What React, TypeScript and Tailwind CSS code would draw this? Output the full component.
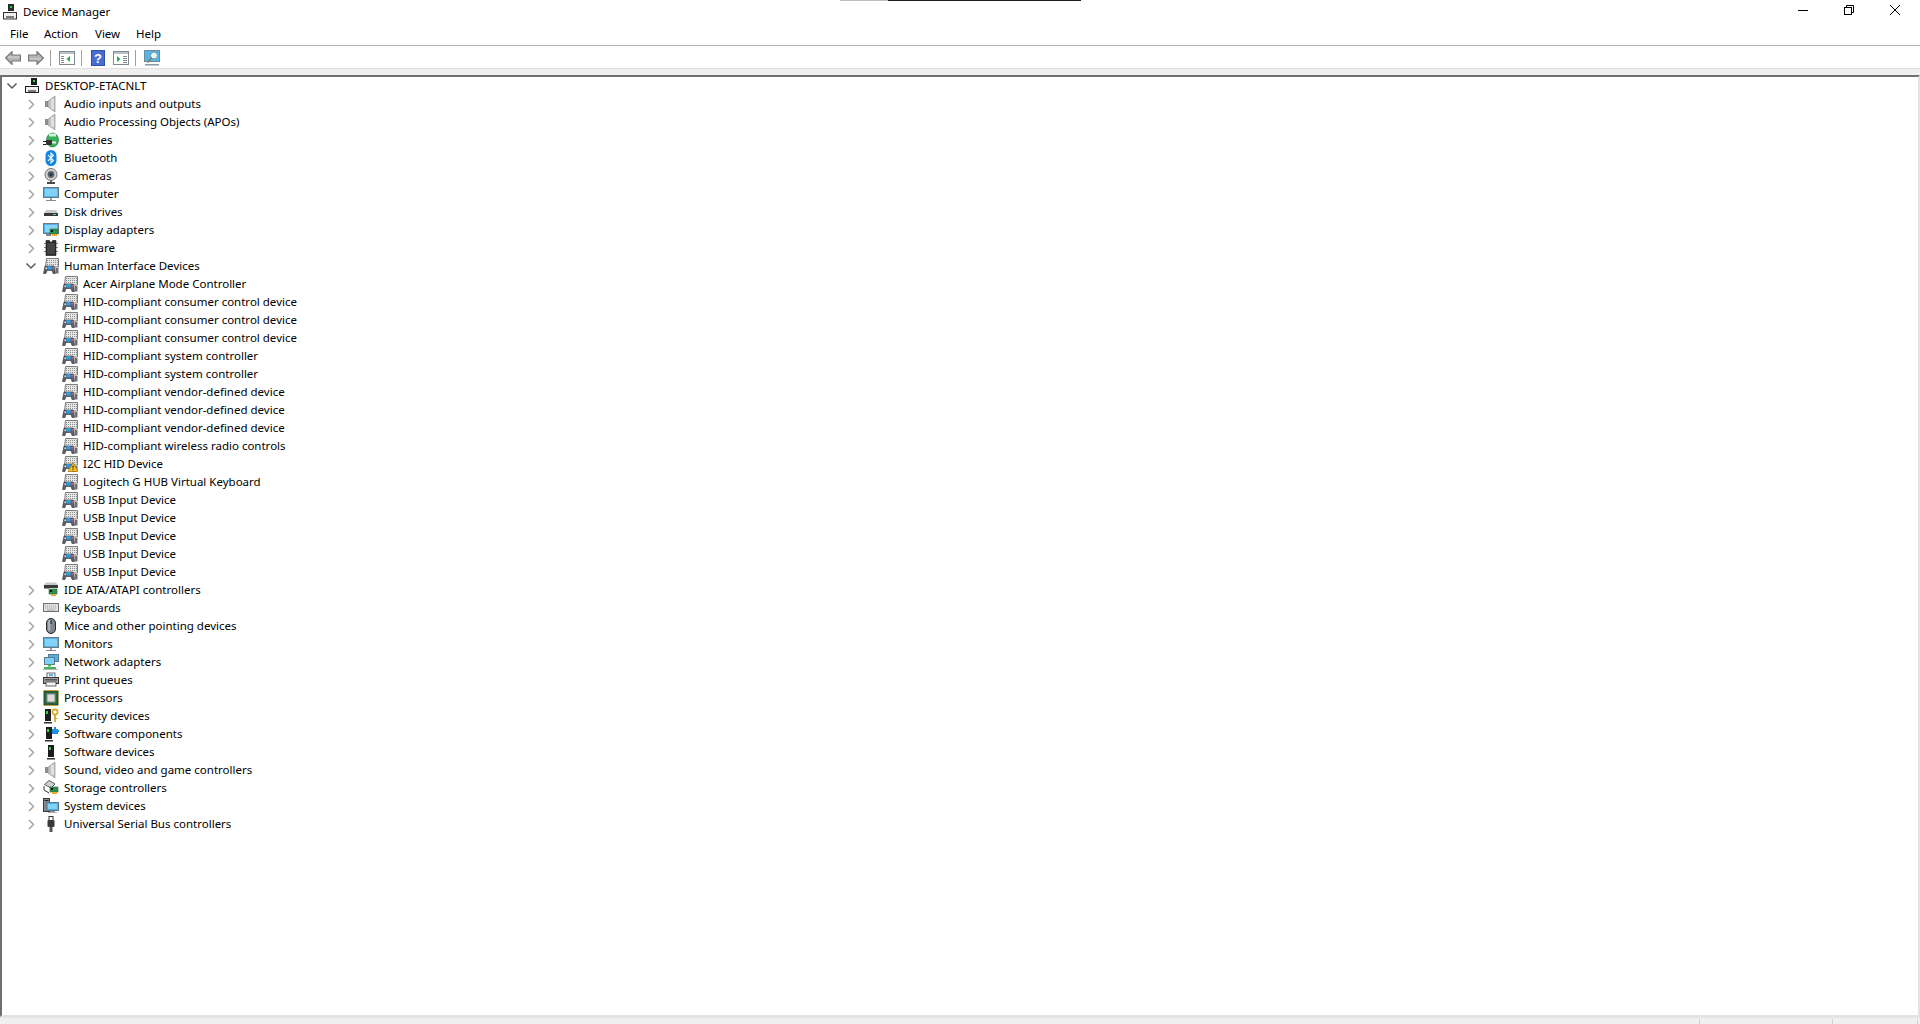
import type { ReactNode } from 'react'

type IconProps = { warn?: boolean }

const Svg = ({ children }: { children: ReactNode }) => (
  <svg width="16" height="16" viewBox="0 0 16 16" className="shrink-0">
    {children}
  </svg>
)

const Tower = ({ x = 4 }: { x?: number }) => (
  <g>
    <rect x={x} y="1" width="6" height="12" fill="#1c1c1c" />
    <rect x={x + 1} y="3" width="2" height="3" fill="#35d04a" />
    <rect x={x - 1} y="14" width="8" height="1.5" fill="#333" />
  </g>
)

const Speaker = () => (
  <Svg>
    <rect x="2" y="5" width="3" height="6" fill="#8f8f8f" />
    <path d="M5 5 L12 0 V16 L5 11 Z" fill="#c2c2c2" stroke="#8a8a8a" strokeWidth="0.6" />
    <rect x="8" y="3" width="3" height="10" fill="#e0e0e0" />
  </Svg>
)

const Screen = () => (
  <Svg>
    <rect x="0.5" y="1.5" width="15" height="10" fill="#4fb0ea" stroke="#6d7a84" />
    <rect x="2" y="3" width="12" height="7" fill="#83d2f8" />
    <rect x="7" y="12" width="2" height="2" fill="#9a9a9a" />
    <rect x="3" y="14" width="10" height="1" fill="#8a8a8a" />
  </Svg>
)

const Card = ({ x = 7, y = 8 }: { x?: number; y?: number }) => (
  <g>
    <rect x={x} y={y} width="8" height="5" fill="#2f8f4e" stroke="#1f6b3a" strokeWidth="0.6" />
    <rect x={x + 1} y={y + 1} width="2" height="2" fill="#111" />
    <rect x={x + 2} y={y + 5} width="5" height="2" fill="#f0a830" />
  </g>
)

const Drive = ({ y = 7 }: { y?: number }) => (
  <g>
    <path d={`M3 ${y} H13 L15 ${y + 3} H1 Z`} fill="#c9c9c9" />
    <rect x="1" y={y + 3} width="14" height="3" fill="#3a3a3a" />
    <rect x="10" y={y + 4} width="3" height="1" fill="#4fe060" />
  </g>
)

const RootIcon = () => (
  <Svg>
    <rect x="7" y="0" width="6" height="7" fill="#1c1c1c" />
    <rect x="9" y="2" width="2" height="2" fill="#35d04a" />
    <rect x="1.5" y="8.5" width="13" height="6" fill="#efefef" stroke="#222" />
    <rect x="4" y="12" width="8" height="2" fill="#7c7c7c" />
  </Svg>
)

const Batteries = () => (
  <Svg>
    <ellipse cx="9.5" cy="8" rx="6" ry="7" fill="#38b05a" stroke="#1e7a3a" strokeWidth="0.7" />
    <rect x="6" y="1.5" width="7" height="3" fill="#d8efd9" />
    <rect x="3" y="8" width="6" height="5" rx="1" fill="#333" />
    <rect x="0" y="9" width="3" height="1" fill="#222" />
    <rect x="0" y="12" width="3" height="1" fill="#222" />
    <rect x="9" y="9.5" width="4" height="2" fill="#eee" />
  </Svg>
)

const Bluetooth = () => (
  <Svg>
    <rect x="2.5" y="0" width="11" height="16" rx="5.5" fill="#0f86e8" />
    <path d="M5 5.2 L10.5 10.5 L8 13 V3 L10.5 5.5 L5 10.8" fill="none" stroke="#fff" strokeWidth="1.1" />
  </Svg>
)

const Camera = () => (
  <Svg>
    <circle cx="8" cy="6.5" r="6" fill="#d0d0d0" stroke="#777" />
    <circle cx="8" cy="6.5" r="3.4" fill="#5a6670" />
    <circle cx="8" cy="6.5" r="1.5" fill="#2a3036" />
    <rect x="7" y="12.5" width="2" height="1.5" fill="#666" />
    <rect x="4" y="14" width="8" height="2" fill="#4a4a4a" />
  </Svg>
)

const Disk = () => (
  <Svg>
    <Drive y={6} />
  </Svg>
)

const Display = () => (
  <Svg>
    <rect x="0.5" y="1.5" width="15" height="10" fill="#4fb0ea" stroke="#6d7a84" />
    <rect x="2" y="3" width="12" height="7" fill="#8ad4f7" />
    <rect x="3" y="12" width="5" height="2" fill="#8a8a8a" />
    <Card x={7} y={7} />
  </Svg>
)

const Firmware = () => (
  <Svg>
    <path d="M3 0.5 H6.5 V2 H9.5 V0.5 H13 V15.5 H3 Z" fill="#2b2b2b" stroke="#111" strokeWidth="0.6" />
    <rect x="4" y="3" width="8" height="11" fill="#444" />
    <rect x="1" y="3" width="2" height="1" fill="#777" />
    <rect x="1" y="7" width="2" height="1" fill="#777" />
    <rect x="1" y="11" width="2" height="1" fill="#777" />
    <rect x="13" y="3" width="2" height="1" fill="#777" />
    <rect x="13" y="7" width="2" height="1" fill="#777" />
    <rect x="13" y="11" width="2" height="1" fill="#777" />
  </Svg>
)

const Hid = ({ warn }: IconProps) => (
  <Svg>
    {/* keyboard */}
    <path d="M3.5 0.5 H15.5 V9 H2.5 Z" fill="#e6e6e6" stroke="#7d7d7d" />
    <path d="M4 2.5 H15 M4 4.5 H15 M4 6.5 H15" stroke="#8f8f8f" strokeWidth="1" strokeDasharray="1 1" />
    {/* gamepad */}
    <path d="M0.5 15.5 L2 8 H11 L12.5 15.5 H10 L9 12.5 H4 L3 15.5 Z" fill="#5d6269" stroke="#2f3338" strokeWidth="0.6" />
    <rect x="4.5" y="8" width="4" height="3.5" fill="#2a9ff0" />
    <rect x="9.5" y="9" width="1.5" height="1.5" fill="#d86a6a" />
    <rect x="2.5" y="9.5" width="1.5" height="1.5" fill="#e8e8e8" />
    <rect x="12.5" y="10" width="3" height="5.5" fill="#6c7076" />
    {warn && (
      <g>
        <path d="M11 6.5 L16 15.5 H6 Z" fill="#f6c02c" stroke="#a87000" strokeWidth="0.7" />
        <rect x="10.5" y="9.5" width="1" height="3" fill="#222" />
        <rect x="10.5" y="13.2" width="1" height="1" fill="#222" />
      </g>
    )}
  </Svg>
)

const Ide = () => (
  <Svg>
    <path d="M3 0.5 H13 L15 3 H1 Z" fill="#c9c9c9" />
    <rect x="1" y="3" width="14" height="3" fill="#3a3a3a" />
    <rect x="1" y="6" width="5" height="1" fill="#9a9a9a" />
    <Card x={6} y={7} />
  </Svg>
)

const Keyboards = () => (
  <Svg>
    <rect x="0.5" y="3.5" width="15" height="8" fill="#e2e2e2" stroke="#6f6f6f" />
    <path d="M2 6 H14 M2 8 H14" stroke="#9c9c9c" strokeWidth="1" strokeDasharray="1 1" />
    <rect x="4" y="9.5" width="8" height="1" fill="#a3a3a3" />
  </Svg>
)

const Mouse = () => (
  <Svg>
    <rect x="3.5" y="0.5" width="9" height="15" rx="4.5" fill="#7d858e" stroke="#26292d" />
    <rect x="5" y="2" width="2.5" height="11" rx="1.2" fill="#a9b0b8" />
    <rect x="7.5" y="2.5" width="1.2" height="3.5" fill="#30343a" />
  </Svg>
)

const Network = () => (
  <Svg>
    <rect x="5.5" y="0.5" width="10" height="7" fill="#4fb0ea" stroke="#5f7a8c" />
    <rect x="1.5" y="3.5" width="10" height="7" fill="#7fd0f7" stroke="#5f7a8c" />
    <rect x="5" y="10.5" width="3" height="2" fill="#45b25a" />
    <rect x="1" y="13" width="12" height="2" fill="#45b25a" />
    <rect x="0" y="15" width="15" height="1" fill="#b4b4b4" />
  </Svg>
)

const Printer = () => (
  <Svg>
    <rect x="4" y="1" width="8" height="5" fill="#fff" stroke="#444" strokeWidth="0.8" />
    <rect x="6" y="2.2" width="4" height="2" fill="#3fb0e8" />
    <rect x="0.5" y="5.5" width="15" height="6" fill="#a6a6a6" stroke="#333" />
    <rect x="2" y="7" width="12" height="1.5" fill="#555" />
    <rect x="3" y="10" width="10" height="4" fill="#f4f4f4" stroke="#444" strokeWidth="0.8" />
  </Svg>
)

const Processor = () => (
  <Svg>
    <rect x="1" y="1" width="14" height="14" fill="#26663f" stroke="#1c4f30" />
    <rect x="4" y="4" width="8" height="8" fill="#dcdcdc" stroke="#8c8c8c" />
    <path d="M1 0.5 H15 M1 15.5 H15 M0.5 1 V15 M15.5 1 V15" stroke="#d0a040" strokeWidth="1" strokeDasharray="1 1" />
  </Svg>
)

const Security = () => (
  <Svg>
    <Tower x={2} />
    <circle cx="12" cy="4" r="2.6" fill="none" stroke="#d9a520" strokeWidth="1.6" />
    <rect x="11.2" y="6" width="1.7" height="8" fill="#d9a520" />
    <rect x="12.5" y="10" width="2" height="1" fill="#d9a520" />
  </Svg>
)

const Components = () => (
  <Svg>
    <Tower x={3} />
    <rect x="9" y="3" width="6" height="5" fill="#1e90e0" />
    <rect x="11" y="1" width="2" height="2" fill="#1e90e0" />
    <rect x="14" y="4" width="2" height="2" fill="#1e90e0" />
  </Svg>
)

const SoftwareDev = () => (
  <Svg>
    <Tower x={5} />
  </Svg>
)

const Storage = () => (
  <Svg>
    <path d="M6 0.5 L12 4 L8 8 L1.5 4.5 Z" fill="#d0d0d0" stroke="#333" strokeWidth="0.8" />
    <path d="M1 6 V10 L6 13" fill="none" stroke="#333" strokeWidth="1" />
    <Card x={7} y={7} />
  </Svg>
)

const SystemDev = () => (
  <Svg>
    <rect x="0.5" y="0.5" width="6" height="13" fill="#8a8a8a" stroke="#3a3a3a" />
    <rect x="1.5" y="2" width="4" height="1" fill="#222" />
    <rect x="3.5" y="4.5" width="12" height="8" fill="#45aee8" stroke="#5f7a8c" />
    <rect x="5" y="6" width="9" height="5" fill="#83d2f7" />
    <rect x="7" y="13" width="5" height="1" fill="#8a8a8a" />
    <rect x="5" y="14" width="9" height="1" fill="#b0b0b0" />
  </Svg>
)

const Usb = () => (
  <Svg>
    <rect x="6" y="0.5" width="4" height="4" fill="#fff" stroke="#333" />
    <rect x="4.5" y="4" width="7" height="7" rx="1" fill="#3a3a3a" />
    <rect x="6.5" y="11" width="3" height="5" fill="#555" />
  </Svg>
)

const Chevron = ({ open }: { open?: boolean }) => (
  <span className="w-[12px] h-[18px] flex items-center justify-center shrink-0">
    <svg width="12" height="12" viewBox="0 0 12 12">
      {open ? (
        <path d="M1.5 3.5 L6 8 L10.5 3.5" fill="none" stroke="#5a5a5a" strokeWidth="1.5" />
      ) : (
        <path d="M4 2 L8.5 6.5 L4 11" fill="none" stroke="#a6a6a6" strokeWidth="1.5" />
      )}
    </svg>
  </span>
)

const Node = ({ label, icon, open }: { label: string; icon: ReactNode; open?: boolean }) => (
  <div className="h-[18px] flex items-center pl-[25px]">
    <Chevron open={open} />
    <span className="ml-[6px] flex">{icon}</span>
    <span className="ml-[5px] whitespace-nowrap">{label}</span>
  </div>
)

const Leaf = ({ label, warn }: { label: string; warn?: boolean }) => (
  <div className="h-[18px] flex items-center pl-[62px]">
    <Hid warn={warn} />
    <span className="ml-[5px] whitespace-nowrap">{label}</span>
  </div>
)

const before: [string, ReactNode][] = [
  ['Audio inputs and outputs', <Speaker />],
  ['Audio Processing Objects (APOs)', <Speaker />],
  ['Batteries', <Batteries />],
  ['Bluetooth', <Bluetooth />],
  ['Cameras', <Camera />],
  ['Computer', <Screen />],
  ['Disk drives', <Disk />],
  ['Display adapters', <Display />],
  ['Firmware', <Firmware />],
]

const hidDevices = [
  'Acer Airplane Mode Controller',
  'HID-compliant consumer control device',
  'HID-compliant consumer control device',
  'HID-compliant consumer control device',
  'HID-compliant system controller',
  'HID-compliant system controller',
  'HID-compliant vendor-defined device',
  'HID-compliant vendor-defined device',
  'HID-compliant vendor-defined device',
  'HID-compliant wireless radio controls',
  'I2C HID Device',
  'Logitech G HUB Virtual Keyboard',
  'USB Input Device',
  'USB Input Device',
  'USB Input Device',
  'USB Input Device',
  'USB Input Device',
]

const after: [string, ReactNode][] = [
  ['IDE ATA/ATAPI controllers', <Ide />],
  ['Keyboards', <Keyboards />],
  ['Mice and other pointing devices', <Mouse />],
  ['Monitors', <Screen />],
  ['Network adapters', <Network />],
  ['Print queues', <Printer />],
  ['Processors', <Processor />],
  ['Security devices', <Security />],
  ['Software components', <Components />],
  ['Software devices', <SoftwareDev />],
  ['Sound, video and game controllers', <Speaker />],
  ['Storage controllers', <Storage />],
  ['System devices', <SystemDev />],
  ['Universal Serial Bus controllers', <Usb />],
]

const Sep = () => <span className="w-px h-[16px] bg-[#a0a0a0] shrink-0" />

const Arrow = ({ flip }: { flip?: boolean }) => (
  <svg width="16" height="14" viewBox="0 0 16 14" className={flip ? 'rotate-180' : ''}>
    <path d="M0.5 7 L7 0.7 V4 H15.5 V10 H7 V13.3 Z" fill="#b4b4b4" stroke="#777" strokeWidth="1.2" />
    <path d="M3 6 H14" stroke="#d6d6d6" />
  </svg>
)

const PaneIcon = ({ left }: { left?: boolean }) => (
  <svg width="16" height="14" viewBox="0 0 16 14">
    <rect x="0.5" y="0.5" width="15" height="13" fill="#fff" stroke="#7f8a92" />
    <rect x="1" y="1" width="14" height="2" fill="#b4c2cd" />
    {left ? (
      <g>
        <path d="M2 5.5 H5 M2 7.5 H5 M2 9.5 H5 M2 11.5 H5" stroke="#7f8a92" />
        <path d="M11 5 V11 L7.5 8 Z" fill="#22b04a" />
      </g>
    ) : (
      <g>
        <path d="M10 5.5 H14 M10 7.5 H14 M10 9.5 H14 M10 11.5 H14" stroke="#7f8a92" />
        <path d="M4 5 V11 L7.5 8 Z" fill="#22b04a" />
      </g>
    )}
  </svg>
)

export default function App() {
  return (
    <div className="relative flex flex-col h-[1024px] w-[1920px] overflow-hidden bg-white text-[11.5px] text-black font-['Noto_Sans',sans-serif]">
      {/* stray line along the top of the capture */}
      <div className="absolute top-0 left-[840px] flex h-px">
        <span className="w-[48px] bg-[#c0c0c0]" />
        <span className="w-[193px] bg-[#1c1c1c]" />
      </div>

      {/* Title bar */}
      <div className="h-[24px] flex items-center justify-between shrink-0">
        <div className="flex items-center pl-[3px]">
          <svg width="14" height="16" viewBox="0 0 14 16">
            <rect x="5" y="0" width="6" height="7" fill="#2a2a2a" />
            <rect x="7" y="2" width="2" height="2" fill="#35d04a" />
            <rect x="0.5" y="8.5" width="13" height="6.5" fill="#efefef" stroke="#333" />
            <rect x="3" y="12" width="8" height="2" fill="#7c7c7c" />
          </svg>
          <span className="ml-[6px]">Device Manager</span>
        </div>
        <div className="flex items-start h-[24px] pt-[5px] pr-[2px]">
          <span className="w-[46px] flex justify-center">
            <svg width="10" height="10" viewBox="0 0 10 10">
              <path d="M0 5.5 H10" stroke="#000" />
            </svg>
          </span>
          <span className="w-[46px] flex justify-center">
            <svg width="10" height="10" viewBox="0 0 10 10">
              <rect x="0.5" y="2.5" width="7" height="7" fill="none" stroke="#000" />
              <path d="M2.5 2.5 V0.5 H9.5 V7.5 H7.5" fill="none" stroke="#000" />
            </svg>
          </span>
          <span className="w-[46px] pr-[1px] flex justify-center">
            <svg width="10" height="10" viewBox="0 0 10 10">
              <path d="M0 0 L10 10 M10 0 L0 10" stroke="#000" />
            </svg>
          </span>
        </div>
      </div>

      {/* Menu bar */}
      <div className="h-[22px] flex items-center pl-[10px] pb-[2px] border-b border-[#b4b4b4] shrink-0">
        <span className="w-[34px]">File</span>
        <span className="w-[51px]">Action</span>
        <span className="w-[41px]">View</span>
        <span>Help</span>
      </div>

      {/* Toolbar */}
      <div className="h-[22px] flex items-center pl-[5px] pt-[2px] shrink-0">
        <Arrow />
        <span className="w-[7px]" />
        <Arrow flip />
        <span className="w-[6px]" />
        <Sep />
        <span className="w-[8px]" />
        <PaneIcon left />
        <span className="w-[6px]" />
        <Sep />
        <span className="w-[9px]" />
        <svg width="14" height="16" viewBox="0 0 14 16">
          <rect x="0" y="0" width="14" height="16" fill="#2f4fb0" />
          <rect x="1" y="1" width="12" height="14" fill="#4a6cd0" />
          <text x="7" y="13" textAnchor="middle" fontSize="13" fontWeight="700" fill="#fff" fontFamily="Liberation Sans">?</text>
        </svg>
        <span className="w-[8px]" />
        <PaneIcon />
        <span className="w-[6px]" />
        <Sep />
        <span className="w-[8px]" />
        <svg width="16" height="16" viewBox="0 0 16 16">
          <rect x="0.5" y="0.5" width="15" height="11" fill="#4fb8ec" stroke="#6d8a9c" />
          <circle cx="10" cy="5.5" r="3.5" fill="#e2f5fd" stroke="#8a8a8a" />
          <path d="M7.5 8 L3.5 12.5" stroke="#8a7a50" strokeWidth="1.6" />
          <rect x="1" y="14" width="14" height="1.5" fill="#8a9aa4" />
        </svg>
      </div>

      <div className="h-[7px] bg-[#f0f0f0] border-t border-[#e0e0e0] shrink-0" />

      {/* Device tree */}
      <div className="flex-1 min-h-0 border-t-2 border-x-2 border-b-2 border-t-[#6f6f6f] border-l-[#6f6f6f] border-r-[#e3e3e3] border-b-[#e3e3e3] overflow-hidden">
        <div className="-ml-[2px]">
          <div className="h-[18px] flex items-center pl-[6px]">
            <Chevron open />
            <span className="ml-[6px] flex">
              <RootIcon />
            </span>
            <span className="ml-[5px]">DESKTOP-ETACNLT</span>
          </div>
          {before.map(([label, icon]) => (
            <Node key={label} label={label} icon={icon} />
          ))}
          <Node label="Human Interface Devices" icon={<Hid />} open />
          {hidDevices.map((label, i) => (
            <Leaf key={i} label={label} warn={label === 'I2C HID Device'} />
          ))}
          {after.map(([label, icon]) => (
            <Node key={label} label={label} icon={icon} />
          ))}
        </div>
      </div>

      {/* Status bar */}
      <div className="h-[7px] flex bg-[#f0f0f0] border-t border-[#e3e3e3] shrink-0">
        <span className="w-[1700px] border-r border-[#d0d0d0] mt-[1px]" />
        <span className="w-[133px] border-r border-[#d0d0d0] mt-[1px]" />
        <span className="w-[85px] border-r border-[#d0d0d0] mt-[1px]" />
      </div>
    </div>
  )
}
